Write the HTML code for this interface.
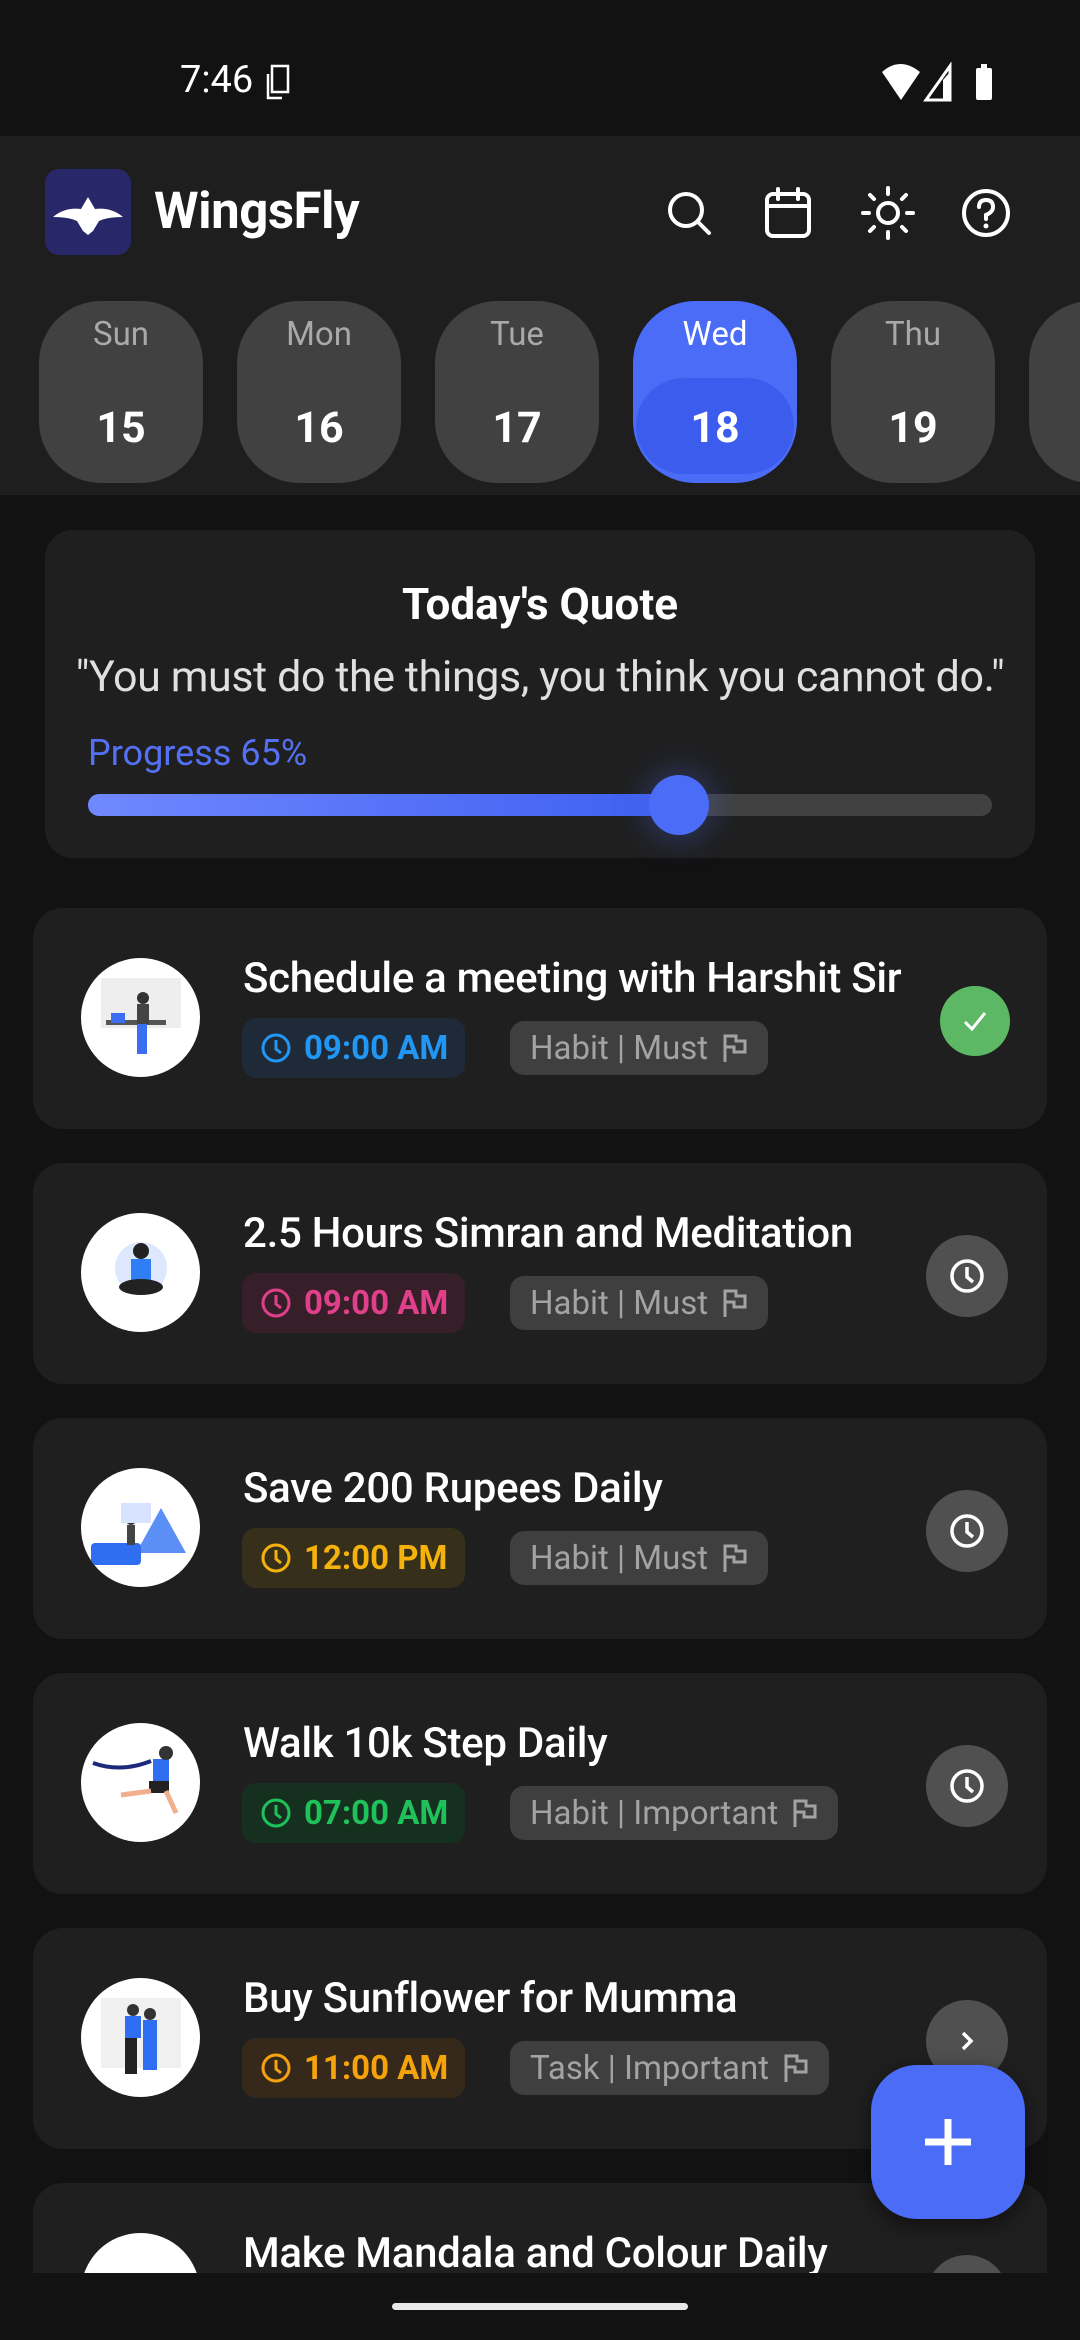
<!DOCTYPE html>
<html><head><meta charset="utf-8"><style>
*{margin:0;padding:0;box-sizing:border-box}
html,body{width:1080px;height:2340px;overflow:hidden;background:#121212}
body{font-family:"Roboto","Liberation Sans",sans-serif;color:#fff}
#w{position:relative;width:1080px;height:2340px;overflow:hidden}
.abs{position:absolute}
.day{position:absolute;top:301px;width:164px;height:182px;border-radius:62px;background:#414141;text-align:center}
.day .n{position:absolute;top:14px;left:0;right:0;font-size:33px;color:#a9a9a9}
.day .d{position:absolute;top:102px;left:0;right:0;font-size:43px;font-weight:bold;color:#fff}
.card{position:absolute;left:33px;width:1014px;height:221px;background:#1f1f1f;border-radius:30px}
.av{position:absolute;left:48px;top:50px;width:119px;height:119px;border-radius:50%;background:#fff;overflow:hidden}
.tt{position:absolute;left:210px;top:46px;font-size:42px;font-weight:500;white-space:nowrap;letter-spacing:-0.3px}
.time{position:absolute;left:209px;top:110px;width:223px;height:60px;border-radius:14px;font-size:33px;font-weight:bold;display:flex;align-items:center;padding-left:18px;gap:12px;white-space:nowrap}
.tag{position:absolute;left:477px;top:113px;height:54px;border-radius:14px;background:#3f3f3f;color:#a3a3a3;font-size:33px;display:flex;align-items:center;padding:0 20px;gap:14px;white-space:nowrap}
.btn{position:absolute;left:893px;top:72px;width:82px;height:82px;border-radius:50%;background:#505050;display:flex;align-items:center;justify-content:center}
</style></head><body><div id="w">
<!-- status bar -->
<div class="abs" style="left:0;top:0;width:1080px;height:136px;background:#121212"></div>
<div class="abs" style="left:180px;top:58px;font-size:38px;color:#fff">7:46</div>
<svg class="abs" style="left:266px;top:64px" width="36" height="38" viewBox="0 0 36 38"><rect x="6" y="2" width="16" height="26" fill="none" stroke="#fff" stroke-width="2.5"/><path d="M2 10v24h14" fill="none" stroke="#fff" stroke-width="2.5"/></svg>
<svg class="abs" style="left:880px;top:62px" width="130" height="40" viewBox="0 0 130 40"><path d="M2 10 Q20 -6 40 10 L21 38 Z" fill="#fff"/><path d="M46 38 L70 4 V38 Z" fill="none" stroke="#fff" stroke-width="3"/><path d="M63 38 V18 L70 10 V38Z" fill="#fff"/><rect x="96" y="6" width="16" height="32" rx="2" fill="#fff"/><rect x="101" y="2" width="6" height="5" fill="#fff"/></svg>
<!-- header -->
<div class="abs" style="left:0;top:136px;width:1080px;height:359px;background:#1e1e1e"></div>
<div class="abs" style="left:45px;top:169px;width:86px;height:86px;border-radius:14px;background:#27276a;overflow:hidden">
<svg width="86" height="86" viewBox="0 0 86 86"><path d="M43 28 L50 40 Q66 38 78 48 Q62 48 54 52 L48 62 L43 66 L38 62 L32 52 Q24 48 8 48 Q20 38 36 40 Z" fill="#fff"/></svg></div>
<div class="abs" style="left:154px;top:182px;font-size:51px;font-weight:bold;letter-spacing:-0.5px">WingsFly</div>
<svg class="abs" style="left:664px;top:188px" width="50" height="50" viewBox="0 0 50 50"><circle cx="22" cy="22" r="16" fill="none" stroke="#fff" stroke-width="4"/><path d="M34 34 L45 45" stroke="#fff" stroke-width="4" stroke-linecap="round"/></svg>
<svg class="abs" style="left:763px;top:186px" width="50" height="54" viewBox="0 0 50 54"><rect x="4" y="8" width="42" height="42" rx="6" fill="none" stroke="#fff" stroke-width="4"/><path d="M4 20 H46 M15 3 V13 M35 3 V13" stroke="#fff" stroke-width="4" stroke-linecap="round"/></svg>
<svg class="abs" style="left:861px;top:186px" width="54" height="54" viewBox="0 0 54 54"><circle cx="27" cy="27" r="10" fill="none" stroke="#fff" stroke-width="4"/><g stroke="#fff" stroke-width="4" stroke-linecap="round"><path d="M27 2V8M27 46V52M2 27H8M46 27H52M9 9L13 13M41 41L45 45M9 45L13 41M41 13L45 9"/></g></svg>
<svg class="abs" style="left:960px;top:187px" width="52" height="52" viewBox="0 0 52 52"><circle cx="26" cy="26" r="22" fill="none" stroke="#fff" stroke-width="4"/><path d="M19 20 Q19 13 26 13 Q33 13 33 20 Q33 25 26 28 V32" fill="none" stroke="#fff" stroke-width="4" stroke-linecap="round"/><circle cx="26" cy="39" r="2.5" fill="#fff"/></svg>
<div class="day" style="left:39px"><div class="n">Sun</div><div class="d">15</div></div>
<div class="day" style="left:237px"><div class="n">Mon</div><div class="d">16</div></div>
<div class="day" style="left:435px"><div class="n">Tue</div><div class="d">17</div></div>
<div class="day" style="left:633px;background:#4a6cf7"><div class="n" style="color:#fff">Wed</div><div class="abs" style="left:3px;right:3px;top:77px;height:96px;border-radius:48px;background:#3c5cee"></div><div class="d">18</div></div>
<div class="day" style="left:831px"><div class="n">Thu</div><div class="d">19</div></div>
<div class="day" style="left:1029px"></div>
<!-- quote -->
<div class="abs" style="left:45px;top:530px;width:990px;height:328px;background:#1f1f1f;border-radius:28px"></div>
<div class="abs" style="left:45px;width:990px;top:578px;text-align:center;font-size:44px;font-weight:bold">Today's Quote</div>
<div class="abs" style="left:30px;width:1020px;top:652px;text-align:center;font-size:43px;color:#e0e0e0;letter-spacing:-0.4px;white-space:nowrap">"You must do the things, you think you cannot do."</div>
<div class="abs" style="left:88px;top:732px;font-size:36px;color:#5471f4">Progress 65%</div>
<div class="abs" style="left:88px;top:794px;width:904px;height:22px;border-radius:11px;background:#414141"></div>
<div class="abs" style="left:88px;top:794px;width:600px;height:22px;border-radius:11px;background:linear-gradient(90deg,#7088ff,#3d5ef0)"></div>
<div class="abs" style="left:649px;top:775px;width:60px;height:60px;border-radius:50%;background:#4a6cf7;box-shadow:0 0 30px 8px rgba(74,108,247,0.25)"></div>
<!-- cards -->
<div class="card" style="top:908px"><div class="av"><svg width="119" height="119"><rect x="20" y="20" width="80" height="50" fill="#eee"/><rect x="25" y="62" width="60" height="5" fill="#555"/><rect x="30" y="55" width="14" height="10" fill="#3b6ef0"/><circle cx="62" cy="40" r="6" fill="#333"/><rect x="56" y="46" width="12" height="20" fill="#444"/><rect x="56" y="66" width="10" height="30" fill="#3b6ef0"/></svg></div>
<div class="tt">Schedule a meeting with Harshit Sir</div>
<div class="time" style="background:#1f2a38;color:#2196f3"><svg width="32" height="32" viewBox="0 0 32 32"><circle cx="16" cy="16" r="13" fill="none" stroke="#2196f3" stroke-width="3"/><path d="M16 8V17L21 21" fill="none" stroke="#2196f3" stroke-width="3"/></svg>09:00 AM</div>
<div class="tag">Habit | Must <svg width="26" height="30" viewBox="0 0 26 30"><path d="M3 29V3H14V8H23V19H12V14H3" fill="none" stroke="#a3a3a3" stroke-width="3"/></svg></div>
<div class="btn" style="left:907px;top:78px;width:70px;height:70px;background:#5cb865"><svg width="30" height="30" viewBox="0 0 30 30"><path d="M5 16L12 23L25 7" fill="none" stroke="#fff" stroke-width="3"/></svg></div></div>

<div class="card" style="top:1163px"><div class="av"><svg width="119" height="119"><circle cx="60" cy="55" r="26" fill="#dde8ff"/><circle cx="60" cy="38" r="8" fill="#222"/><rect x="50" y="46" width="20" height="24" fill="#2f7ef5"/><ellipse cx="60" cy="74" rx="22" ry="8" fill="#222"/></svg></div>
<div class="tt">2.5 Hours Simran and Meditation</div>
<div class="time" style="background:#371f2a;color:#e0408a"><svg width="32" height="32" viewBox="0 0 32 32"><circle cx="16" cy="16" r="13" fill="none" stroke="#e0408a" stroke-width="3"/><path d="M16 8V17L21 21" fill="none" stroke="#e0408a" stroke-width="3"/></svg>09:00 AM</div>
<div class="tag">Habit | Must <svg width="26" height="30" viewBox="0 0 26 30"><path d="M3 29V3H14V8H23V19H12V14H3" fill="none" stroke="#a3a3a3" stroke-width="3"/></svg></div>
<div class="btn"><svg width="38" height="38" viewBox="0 0 38 38"><circle cx="19" cy="19" r="15" fill="none" stroke="#fff" stroke-width="3.5"/><path d="M19 10V20L25 25" fill="none" stroke="#fff" stroke-width="3.5"/></svg></div></div>

<div class="card" style="top:1418px"><div class="av"><svg width="119" height="119"><path d="M55 85L80 40L105 85Z" fill="#5b8ff5"/><rect x="10" y="75" width="50" height="22" rx="4" fill="#2f6ef0"/><circle cx="50" cy="52" r="5" fill="#333"/><rect x="46" y="57" width="8" height="20" fill="#444"/><rect x="40" y="35" width="30" height="20" fill="#d8e4ff"/></svg></div>
<div class="tt">Save 200 Rupees Daily</div>
<div class="time" style="background:#36301a;color:#f5b10c"><svg width="32" height="32" viewBox="0 0 32 32"><circle cx="16" cy="16" r="13" fill="none" stroke="#f5b10c" stroke-width="3"/><path d="M16 8V17L21 21" fill="none" stroke="#f5b10c" stroke-width="3"/></svg>12:00 PM</div>
<div class="tag">Habit | Must <svg width="26" height="30" viewBox="0 0 26 30"><path d="M3 29V3H14V8H23V19H12V14H3" fill="none" stroke="#a3a3a3" stroke-width="3"/></svg></div>
<div class="btn"><svg width="38" height="38" viewBox="0 0 38 38"><circle cx="19" cy="19" r="15" fill="none" stroke="#fff" stroke-width="3.5"/><path d="M19 10V20L25 25" fill="none" stroke="#fff" stroke-width="3.5"/></svg></div></div>

<div class="card" style="top:1673px"><div class="av"><svg width="119" height="119"><path d="M12 40Q40 50 70 38" stroke="#1b2a7a" stroke-width="4" fill="none"/><rect x="72" y="36" width="16" height="24" fill="#2f6ef0"/><circle cx="85" cy="30" r="7" fill="#333"/><rect x="68" y="58" width="20" height="12" fill="#222"/><path d="M70 68L40 72M85 68L95 90" stroke="#f0b090" stroke-width="5"/></svg></div>
<div class="tt">Walk 10k Step Daily</div>
<div class="time" style="background:#163020;color:#1fc15a"><svg width="32" height="32" viewBox="0 0 32 32"><circle cx="16" cy="16" r="13" fill="none" stroke="#1fc15a" stroke-width="3"/><path d="M16 8V17L21 21" fill="none" stroke="#1fc15a" stroke-width="3"/></svg>07:00 AM</div>
<div class="tag">Habit | Important <svg width="26" height="30" viewBox="0 0 26 30"><path d="M3 29V3H14V8H23V19H12V14H3" fill="none" stroke="#a3a3a3" stroke-width="3"/></svg></div>
<div class="btn"><svg width="38" height="38" viewBox="0 0 38 38"><circle cx="19" cy="19" r="15" fill="none" stroke="#fff" stroke-width="3.5"/><path d="M19 10V20L25 25" fill="none" stroke="#fff" stroke-width="3.5"/></svg></div></div>

<div class="card" style="top:1928px"><div class="av"><svg width="119" height="119"><rect x="20" y="20" width="80" height="70" fill="#f0f0f0"/><rect x="44" y="38" width="16" height="22" fill="#2f6ef0"/><rect x="44" y="60" width="12" height="36" fill="#222"/><rect x="62" y="42" width="14" height="50" fill="#2f6ef0"/><circle cx="52" cy="32" r="6" fill="#333"/><circle cx="69" cy="36" r="6" fill="#333"/></svg></div>
<div class="tt">Buy Sunflower for Mumma</div>
<div class="time" style="background:#36281a;color:#f5a30c"><svg width="32" height="32" viewBox="0 0 32 32"><circle cx="16" cy="16" r="13" fill="none" stroke="#f5a30c" stroke-width="3"/><path d="M16 8V17L21 21" fill="none" stroke="#f5a30c" stroke-width="3"/></svg>11:00 AM</div>
<div class="tag">Task | Important <svg width="26" height="30" viewBox="0 0 26 30"><path d="M3 29V3H14V8H23V19H12V14H3" fill="none" stroke="#a3a3a3" stroke-width="3"/></svg></div>
<div class="btn"><svg width="30" height="30" viewBox="0 0 30 30"><path d="M11 7L19 15L11 23" fill="none" stroke="#fff" stroke-width="3.5"/></svg></div></div>

<div class="card" style="top:2183px;height:90px;border-radius:30px 30px 0 0;overflow:hidden"><div class="av" style="top:50px"></div>
<div class="tt">Make Mandala and Colour Daily</div>
<div class="btn" style="top:72px"></div></div>
<!-- FAB -->
<div class="abs" style="left:871px;top:2065px;width:154px;height:154px;border-radius:46px;background:#4a6cf7;box-shadow:0 6px 20px rgba(0,0,0,0.5)">
<svg width="154" height="154"><path d="M77 54V100M54 77H100" stroke="#fff" stroke-width="7"/></svg></div>
<!-- nav -->
<div class="abs" style="left:0;top:2273px;width:1080px;height:67px;background:#121212"></div>
<div class="abs" style="left:392px;top:2303px;width:296px;height:7px;border-radius:4px;background:#e8e8e8"></div>
</div></body></html>
